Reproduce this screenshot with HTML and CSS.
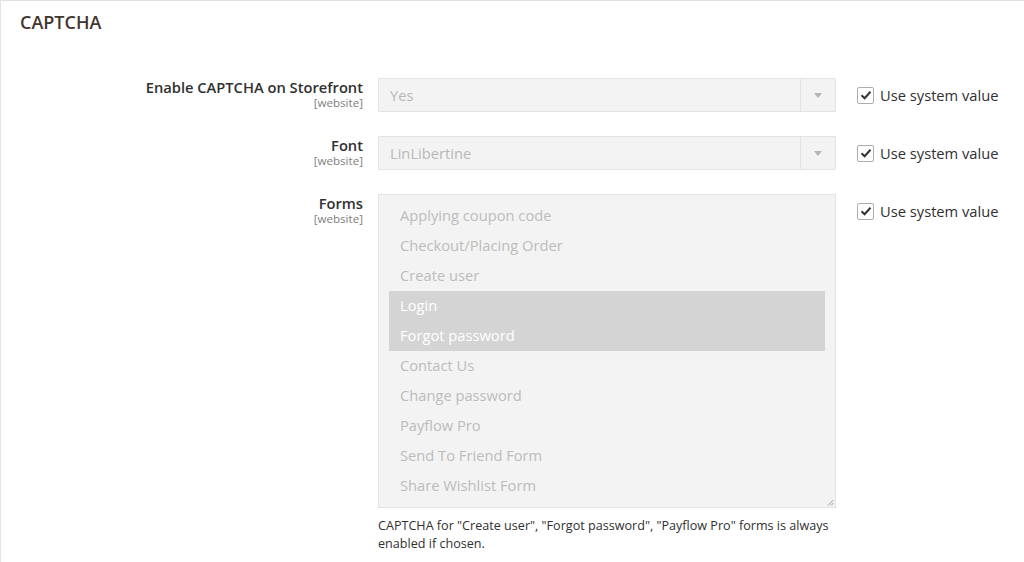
FILE: index.html
```html
<!DOCTYPE html>
<html>
<head>
<meta charset="utf-8">
<link rel="stylesheet" href="styles.css">
</head>
<body>
<div class="page">
  <h2 class="title">CAPTCHA</h2>
  <div class="form">
    <div class="row">
      <div class="label"><span class="name">Enable CAPTCHA on Storefront</span><span class="scope">[website]</span></div>
      <div class="control">
        <div class="select"><span class="value">Yes</span><span class="arrow"><svg width="8" height="5" viewBox="0 0 8 5"><path d="M0 0H8L4 5Z" fill="#b5b5b5"/></svg></span></div>
      </div>
      <label class="inherit"><span class="cb"><svg width="12" height="10" viewBox="0 0 12 10"><path d="M1.5 5.2L4.6 8.2L10.5 1.8" fill="none" stroke="#333" stroke-width="2"/></svg></span>Use system value</label>
    </div>
    <div class="row">
      <div class="label"><span class="name">Font</span><span class="scope">[website]</span></div>
      <div class="control">
        <div class="select"><span class="value">LinLibertine</span><span class="arrow"><svg width="8" height="5" viewBox="0 0 8 5"><path d="M0 0H8L4 5Z" fill="#b5b5b5"/></svg></span></div>
      </div>
      <label class="inherit"><span class="cb"><svg width="12" height="10" viewBox="0 0 12 10"><path d="M1.5 5.2L4.6 8.2L10.5 1.8" fill="none" stroke="#333" stroke-width="2"/></svg></span>Use system value</label>
    </div>
    <div class="row">
      <div class="label"><span class="name">Forms</span><span class="scope">[website]</span></div>
      <div class="control">
        <div class="multi">
          <div class="opt">Applying coupon code</div>
          <div class="opt">Checkout/Placing Order</div>
          <div class="opt">Create user</div>
          <div class="opt sel">Login</div>
          <div class="opt sel">Forgot password</div>
          <div class="opt">Contact Us</div>
          <div class="opt">Change password</div>
          <div class="opt">Payflow Pro</div>
          <div class="opt">Send To Friend Form</div>
          <div class="opt">Share Wishlist Form</div>
          <svg class="grip" width="7" height="7" viewBox="0 0 7 7"><path d="M6.5 1L1 6.5M6.5 4L4 6.5" stroke="#9a9a9a" stroke-width="1"/></svg>
        </div>
        <p class="note">CAPTCHA for "Create user", "Forgot password", "Payflow Pro" forms is always enabled if chosen.</p>
      </div>
      <label class="inherit"><span class="cb"><svg width="12" height="10" viewBox="0 0 12 10"><path d="M1.5 5.2L4.6 8.2L10.5 1.8" fill="none" stroke="#333" stroke-width="2"/></svg></span>Use system value</label>
    </div>
  </div>
</div>
</body>
</html>
```
FILE: styles.css
```css
html, body {
  margin: 0;
  padding: 0;
  background: #fff;
}
body {
  font-family: "Open Sans", "Liberation Sans", sans-serif;
  color: #303030;
}
.page {
  height: 562px;
  box-sizing: border-box;
  border-top: 1px solid #e3e3e3;
  border-left: 1px solid #e3e3e3;
  padding: 0 0 0 19px;
  overflow: hidden;
}
.title {
  margin: 0;
  padding-top: 10px;
  font-size: 18px;
  line-height: 22px;
  font-weight: 600;
  color: #41362f;
}
.form {
  margin-top: 45px;
  display: flex;
  flex-direction: column;
  gap: 24px;
}
.row {
  display: grid;
  grid-template-columns: 358px 458px auto;
  align-items: start;
}
.label {
  display: flex;
  flex-direction: column;
  align-items: flex-end;
  padding-right: 15px;
}
.name {
  font-size: 14.7px;
  font-weight: 600;
  line-height: 18px;
  color: #303030;
}
.scope {
  font-size: 11.6px;
  line-height: 13px;
  color: #808080;
}
.control {
  width: 458px;
}
.select {
  box-sizing: border-box;
  height: 34px;
  border: 1px solid #e3e3e3;
  background: #f3f3f3;
  display: flex;
  align-items: center;
  border-radius: 1px;
}
.value {
  flex: 1;
  padding-left: 11px;
  padding-bottom: 1px;
  font-size: 14.7px;
  color: #b8b8b8;
}
.arrow {
  width: 34px;
  height: 32px;
  border-left: 1px solid #e3e3e3;
  display: flex;
  align-items: center;
  justify-content: center;
}
.inherit {
  margin-left: 21px;
  display: flex;
  align-items: center;
  gap: 6px;
  font-size: 14.7px;
  color: #303030;
  height: 34px;
  white-space: nowrap;
}
.cb {
  box-sizing: border-box;
  width: 17px;
  height: 17px;
  border: 1px solid #adadad;
  border-radius: 2px;
  background: #fff;
  display: flex;
  align-items: center;
  justify-content: center;
}
.multi {
  position: relative;
  box-sizing: border-box;
  height: 314px;
  border: 1px solid #e3e3e3;
  background: #f3f3f3;
  padding: 6px 10px;
}
.opt {
  height: 30px;
  line-height: 28px;
  padding-left: 11px;
  font-size: 14.7px;
  color: #bcbcbc;
}
.opt.sel {
  background: #d4d4d4;
  color: #fff;
}
.grip {
  position: absolute;
  right: 1px;
  bottom: 1px;
}
.note {
  margin: 9px 0 0;
  font-size: 12.6px;
  line-height: 18px;
  color: #303030;
}
```
